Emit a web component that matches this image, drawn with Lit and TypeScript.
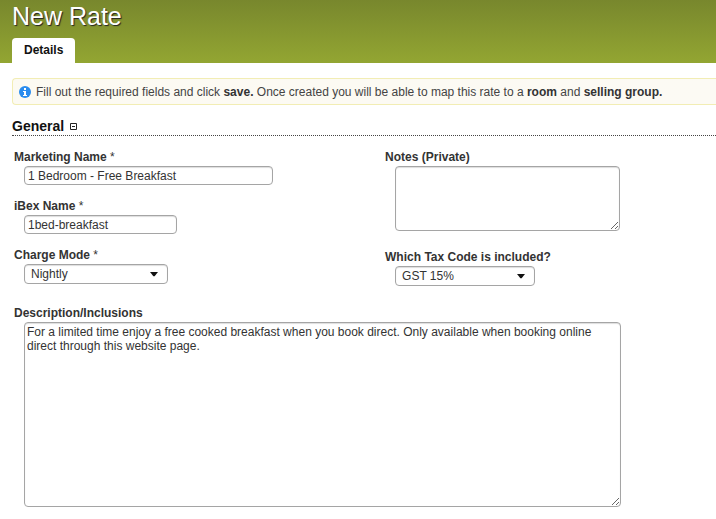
import { LitElement, html, css } from "lit";
import { customElement, state } from "lit/decorators.js";

@customElement("app-root")
export class AppRoot extends LitElement {
  static styles = css`
    :host {
      display: block;
      font: 12px/14px "Liberation Sans", Arial, sans-serif;
      color: #333;
      background: #fff;
    }
    * {
      box-sizing: border-box;
    }
    .banner {
      display: flex;
      flex-direction: column;
      align-items: flex-start;
      padding: 0 12px;
      background: linear-gradient(#78872d, #93a632);
    }
    .title {
      margin: 0 0 6px;
      font-size: 25px;
      line-height: 32px;
      font-weight: normal;
      color: #fff;
      text-shadow: 1px 1px 1px #222;
    }
    .tab {
      padding: 5px 12px 6px;
      border: 0;
      border-radius: 4px 4px 0 0;
      background: #fff;
      color: #111;
      font: bold 12px/14px "Liberation Sans", Arial, sans-serif;
    }
    .content {
      padding: 15px 0 12px 12px;
    }
    .notice {
      display: flex;
      align-items: center;
      gap: 5px;
      margin: 0 0 12px;
      padding: 6px 6px 5px;
      border: 1px solid #f2edb4;
      border-right: 0;
      border-radius: 4px 0 0 4px;
      background: linear-gradient(90deg, #fcfaf2, #fcfaf4);
      color: #444;
    }
    .notice strong {
      color: #333;
    }
    .icon {
      flex: none;
      display: block;
    }
    .notice p {
      margin: 0;
    }
    .section {
      display: flex;
      align-items: center;
      gap: 6px;
      margin: 0 0 14px;
      border-bottom: 1px dotted #444;
      font-size: 14px;
      line-height: 18px;
      color: #111;
    }
    .toggle {
      display: block;
      padding: 0;
      border: 0;
      background: none;
    }
    .fields {
      display: grid;
      grid-template-columns: 37fr 33fr;
      padding-left: 2px;
    }
    .column {
      display: flex;
      flex-direction: column;
      gap: 14px;
    }
    .column.side {
      gap: 19px;
    }
    .field {
      display: flex;
      flex-direction: column;
      align-items: flex-start;
    }
    .description {
      margin: 20px 0 0 2px;
    }
    .label {
      padding-bottom: 2px;
      font-weight: bold;
    }
    .required {
      font-weight: normal;
    }
    .control {
      display: block;
      margin: 0;
      max-width: 100%;
      border: 1px solid #a5a5a5;
      border-radius: 4px;
      background: #fff;
      color: #333;
      font: 12px/14px "Liberation Sans", Arial, sans-serif;
      box-shadow: inset 0 1px 1px #ddd;
    }
    .box {
      position: relative;
      margin-left: 10px;
      max-width: calc(100% - 22px);
    }
    .text {
      height: 19px;
      padding: 1px 3px;
    }
    .area {
      padding: 2px;
      resize: both;
    }
    .select {
      width: 100%;
      height: 20px;
      padding: 0 6px;
      appearance: none;
    }
    .arrow {
      position: absolute;
      right: 10px;
      top: 8px;
      pointer-events: none;
    }
    .wide {
      width: 249px;
    }
    .medium {
      width: 153px;
    }
    .mode {
      width: 144px;
    }
    .tax {
      width: 140px;
    }
    .notes {
      width: 225px;
      height: 65px;
    }
    .long {
      width: 597px;
      height: 185px;
    }
  `;

  @state() private open = true;

  private arrow() {
    return html`<svg class="arrow" width="8" height="5" viewBox="0 0 8 5" aria-hidden="true">
      <path d="M0 0H8L4.6 4.2H3.4Z" fill="#111" />
    </svg>`;
  }

  private fields() {
    return html`
      <div class="fields">
        <div class="column">
          <div class="field">
            <label class="label" for="name">Marketing Name <span class="required">*</span></label>
            <div class="box wide">
              <input class="control text wide" id="name" required value="1 Bedroom - Free Breakfast" />
            </div>
          </div>
          <div class="field">
            <label class="label" for="ibex">iBex Name <span class="required">*</span></label>
            <div class="box medium">
              <input class="control text medium" id="ibex" required value="1bed-breakfast" />
            </div>
          </div>
          <div class="field">
            <label class="label" for="mode">Charge Mode <span class="required">*</span></label>
            <div class="box mode">
              <select class="control select" id="mode" required>
                <option>Nightly</option>
              </select>
              ${this.arrow()}
            </div>
          </div>
        </div>
        <div class="column side">
          <div class="field">
            <label class="label" for="notes">Notes (Private)</label>
            <div class="box">
              <textarea class="control area notes" id="notes"></textarea>
            </div>
          </div>
          <div class="field">
            <label class="label" for="tax">Which Tax Code is included?</label>
            <div class="box tax">
              <select class="control select" id="tax">
                <option>GST 15%</option>
              </select>
              ${this.arrow()}
            </div>
          </div>
        </div>
      </div>
      <div class="field description">
        <label class="label" for="description">Description/Inclusions</label>
        <div class="box">
          <textarea
            class="control area long"
            id="description"
            spellcheck="false"
            .value=${"For a limited time enjoy a free cooked breakfast when you book direct. Only available when booking online direct through this website page."}
          ></textarea>
        </div>
      </div>
    `;
  }

  render() {
    return html`
      <header class="banner">
        <h1 class="title">New Rate</h1>
        <button class="tab" type="button">Details</button>
      </header>
      <main class="content">
        <div class="notice">
          <svg class="icon" width="12" height="12" viewBox="0 0 12 12" aria-hidden="true">
            <circle cx="6" cy="6" r="6" fill="#2a8cee" />
            <path d="M5 2H7V4H5ZM4 5H7V9H8V10H4V9H5V6H4Z" fill="#fff" />
          </svg>
          <p>
            Fill out the required fields and click <strong>save.</strong> Once created you will be
            able to map this rate to a <strong>room</strong> and <strong>selling group.</strong>
          </p>
        </div>
        <h2 class="section">
          General
          <button
            class="toggle"
            type="button"
            aria-label="Toggle General"
            aria-expanded=${this.open ? "true" : "false"}
            @click=${() => (this.open = !this.open)}
          >
            <svg class="icon" width="7" height="7" viewBox="0 0 7 7" aria-hidden="true">
              <path d="M0.5 0.5H6.5V6.5H0.5ZM2 3.5H5" fill="none" stroke="#222" />
            </svg>
          </button>
        </h2>
        ${this.open ? this.fields() : null}
      </main>
    `;
  }
}
